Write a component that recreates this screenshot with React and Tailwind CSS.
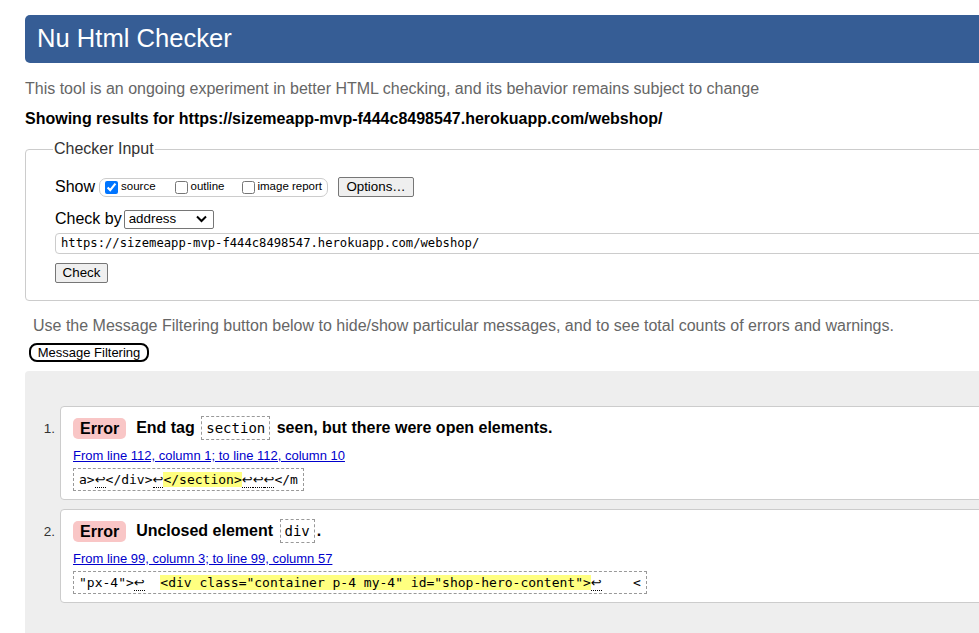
import React from 'react';

const mono = "font-['DejaVu_Sans_Mono','Liberation_Mono',monospace]";

function Ret() {
  return <span className="font-['DejaVu_Sans',sans-serif] text-[13px] border-b border-dotted border-black">↩</span>;
}

function Code({ children }) {
  return (
    <code className={`${mono} font-normal text-[14px] border border-dashed border-[#999] px-[4px] py-[3px] mx-[2px]`}>
      {children}
    </code>
  );
}

function ErrorCard({ num, message, from, extract }) {
  return (
    <li className="flex items-start">
      <span className="w-[35px] pr-[5px] pt-[13px] text-right text-[13.5px] text-[#333]">{num}.</span>
      <div className="flex-1 bg-white border border-[#ccc] rounded-[4px] pl-[12px] pt-[10px] h-[94px]">
        <p className="flex items-center text-[16px] font-bold text-black h-[22px]">
          <span className="bg-[#f9c6c6] rounded-[5px] px-[7px] h-[21px] leading-[21px] mr-[10px]">Error</span>
          <span className="whitespace-pre">{message}</span>
        </p>
        <p className="mt-[9px] text-[13px] leading-[16px]">
          <a href="#" className="underline text-[#0000cc]">{from}</a>
        </p>
        <div className={`${mono} inline-block mt-[4px] border border-dashed border-[#999] px-[5px] h-[23px] leading-[21px] text-[13px] text-black whitespace-pre`}>
          {extract}
        </div>
      </div>
    </li>
  );
}

export default function App() {
  return (
    <div className="w-full h-[633px] overflow-hidden bg-white font-['Liberation_Sans',Arial,sans-serif] text-black">
      <div className="w-[1300px] pl-[25px] pt-[15px]">
        <header className="h-[48px] bg-[#365d95] rounded-[5px] flex items-center pl-[12px]">
          <h1 className="text-white text-[25.6px] leading-none">Nu Html Checker</h1>
        </header>

        <p className="mt-[16px] text-[16px] leading-[20px] text-[#666]">
          This tool is an ongoing experiment in better HTML checking, and its behavior remains subject to change
        </p>
        <p className="mt-[10px] text-[16px] leading-[20px] font-bold">
          Showing results for https://sizemeapp-mvp-f444c8498547.herokuapp.com/webshop/
        </p>

        <fieldset className="mt-[10px] border border-[#ccc] rounded-[4px] pl-[29px] pb-[17px] h-[162px]">
          <legend className="text-[16px] leading-[20px] text-[#333] px-[1px] ml-[-2px]">Checker Input</legend>

          <div className="flex items-center h-[20px] mt-[18px]">
            <span className="text-[16px] mr-[4px]">Show</span>
            <div className="flex items-center h-[19px] border border-[#ccc] rounded-[7px] px-[5px] text-[11.5px]">
              <label className="flex items-center mr-[19px]">
                <input type="checkbox" defaultChecked className="w-[13px] h-[13px] m-0 mr-[3px] accent-[#0075ff]" />
                source
              </label>
              <label className="flex items-center mr-[18px]">
                <input type="checkbox" className="w-[13px] h-[13px] m-0 mr-[3px]" />
                outline
              </label>
              <label className="flex items-center">
                <input type="checkbox" className="w-[13px] h-[13px] m-0 mr-[2px]" />
                image report
              </label>
            </div>
            <button className="ml-[10px] h-[20px] w-[76px] bg-[#efefef] border border-[#767676] rounded-[2px] text-[13.33px] leading-none">
              Options…
            </button>
          </div>

          <div className="flex items-center h-[20px] mt-[12px]">
            <span className="text-[16px] mr-[2px]">Check by</span>
            <div className="flex items-center justify-between w-[90px] h-[19px] border border-[#767676] rounded-[2px] pl-[4px] pr-[6px] text-[13.33px]">
              <span>address</span>
              <svg width="11" height="8" viewBox="0 0 11 8" fill="none">
                <path d="M1 1.5 L5.5 6 L10 1.5" stroke="black" strokeWidth="2" />
              </svg>
            </div>
          </div>

          <div className={`${mono} mt-[4px] h-[21px] border border-[#ccc] rounded-[4px] pl-[5px] flex items-center text-[12.2px]`}>
            https://sizemeapp-mvp-f444c8498547.herokuapp.com/webshop/
          </div>

          <button className="mt-[9px] h-[20px] w-[53px] bg-[#efefef] border border-[#767676] rounded-[2px] text-[13.33px] leading-none">
            Check
          </button>
        </fieldset>

        <p className="mt-[15px] ml-[8px] text-[16px] leading-[20px] text-[#666]">
          Use the Message Filtering button below to hide/show particular messages, and to see total counts of errors and warnings.
        </p>
        <button className="block mt-[7px] ml-[4px] h-[19px] w-[120px] bg-white border-2 border-black rounded-[8px] text-[13px] leading-none">
          Message Filtering
        </button>

        <div className="mt-[9px] bg-[#eee] rounded-tl-[4px] pt-[35px] h-[300px]">
          <ol className="flex flex-col gap-[9px]">
            <ErrorCard
              num={1}
              message={<>End tag <Code>section</Code> seen, but there were open elements.</>}
              from="From line 112, column 1; to line 112, column 10"
              extract={<>a&gt;<Ret />&lt;/div&gt;<Ret /><mark className="bg-[#ffff80]">&lt;/section&gt;</mark><Ret /><Ret /><Ret />&lt;/m</>}
            />
            <ErrorCard
              num={2}
              message={<>Unclosed element <Code>div</Code>.</>}
              from="From line 99, column 3; to line 99, column 57"
              extract={<>"px-4"&gt;<Ret />  <mark className="bg-[#ffff80]">&lt;div class="container p-4 my-4" id="shop-hero-content"&gt;</mark><Ret />    &lt;</>}
            />
          </ol>
        </div>
      </div>
    </div>
  );
}
